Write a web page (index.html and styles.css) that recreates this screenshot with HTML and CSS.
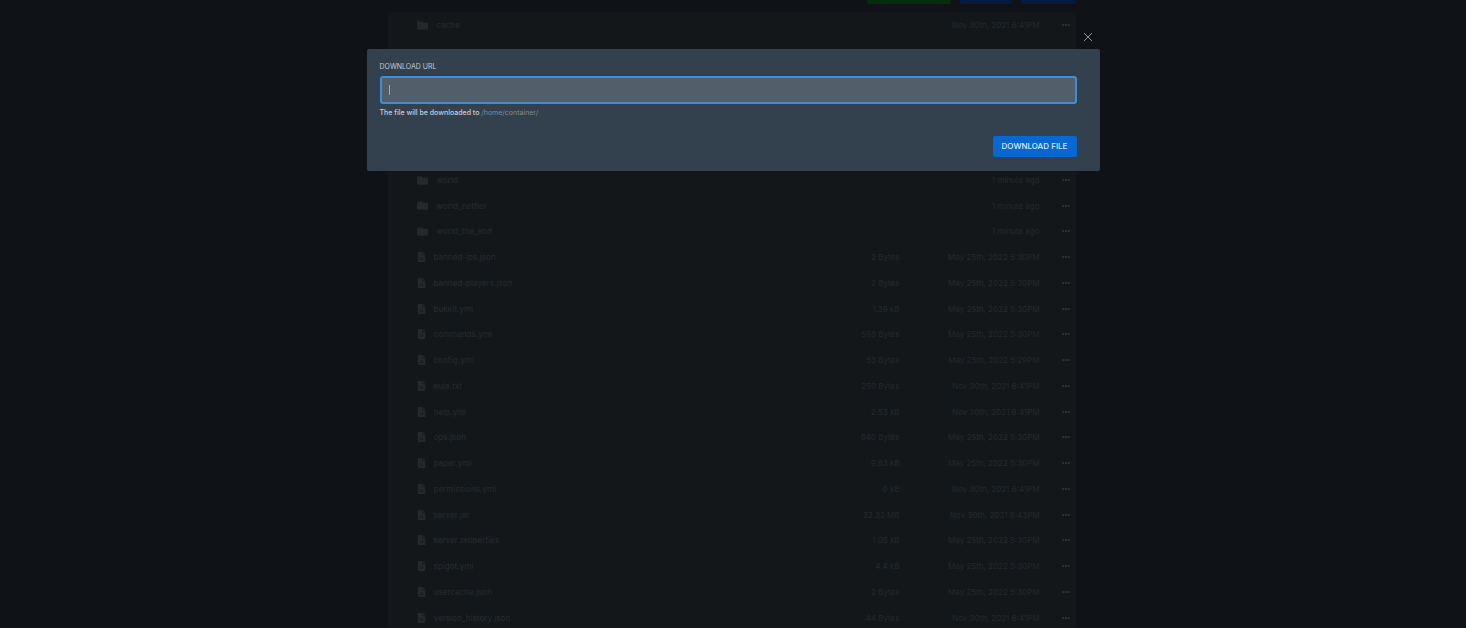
FILE: index.html
```
<!DOCTYPE html>
<html lang="en">
<head>
<meta charset="utf-8">
<title>File Manager</title>
<link rel="stylesheet" href="styles.css">
</head>
<body>
<svg class="sprite" aria-hidden="true">
  <symbol id="folder" viewBox="0 0 512 512"><path d="M464 128H272l-64-64H48C21.500 64 0 85.500 0 112v288c0 26.500 21.500 48 48 48h416c26.500 0 48-21.500 48-48V176c0-26.500-21.500-48-48-48z"/></symbol>
  <symbol id="file" viewBox="0 0 384 512"><path d="M224 136V0H24C10.700 0 0 10.700 0 24v464c0 13.300 10.700 24 24 24h336c13.300 0 24-10.700 24-24V160H248c-13.200 0-24-10.800-24-24zm64 236c0 6.600-5.400 12-12 12H108c-6.600 0-12-5.400-12-12v-8c0-6.600 5.400-12 12-12h168c6.600 0 12 5.400 12 12v8zm0-64c0 6.600-5.400 12-12 12H108c-6.600 0-12-5.400-12-12v-8c0-6.600 5.400-12 12-12h168c6.600 0 12 5.400 12 12v8zM384 122v6H256V0h6.100c6.400 0 12.500 2.500 17 7l97.900 98c4.500 4.500 7 10.600 7 17z"/></symbol>
  <symbol id="dots" viewBox="0 0 512 512"><path d="M328 256a72 72 0 1 1-144 0 72 72 0 0 1 144 0zm104-72a72 72 0 1 0 0 144 72 72 0 0 0 0-144zM80 184a72 72 0 1 0 0 144 72 72 0 0 0 0-144z"/></symbol>
</svg>
<main class="page">
  <div class="actions">
    <button class="action action-green" aria-label="Create Directory"></button>
    <button class="action action-upload" aria-label="Upload"></button>
    <button class="action action-new" aria-label="New File"></button>
  </div>
  <table class="files">
    <tbody id="rows"></tbody>
  </table>
</main>
<div class="overlay">
  <section class="modal" role="dialog" aria-modal="true" aria-label="Download file">
    <button class="close" aria-label="Close"><svg viewBox="0 0 10 10"><path d="M1 1l8 8M9 1L1 9"/></svg></button>
    <form class="form">
      <label class="label" for="url">DOWNLOAD URL</label>
      <div class="field"><input class="input" id="url" type="text"><span class="caret"></span></div>
      <p class="help">The file will be downloaded to <span class="path">/home/container/</span></p>
      <button class="submit" type="button">DOWNLOAD FILE</button>
    </form>
  </section>
</div>
<script src="files.js"></script>
</body>
</html>
```
FILE: styles.css
```
* { box-sizing: border-box; }
body {
  margin: 0;
  height: 100vh;
  overflow: hidden;
  background: #0f1318;
  font-family: Inter, "Open Sans", sans-serif;
  font-size: 8px;
  color: #25292c;
}
.sprite { display: none; }
button { border: 0; padding: 0; font: inherit; }
.page { width: 47%; margin: 0 auto; padding-right: 2px; }
.actions { display: flex; justify-content: flex-end; gap: 9px; }
.action { height: 4px; border-radius: 0 0 2px 2px; background: #031d42; }
.action-green { width: 84px; background: #052c0c; }
.action-upload { width: 52px; }
.action-new { width: 55px; }
.files {
  width: 100%;
  margin-top: 8px;
  border-collapse: collapse;
  table-layout: fixed;
  background: #13171a;
}
.row { height: 26px; }
.row:nth-child(4n) { height: 25px; }
.covered { height: 129px; }
.files td { padding: 0; line-height: 10px; vertical-align: middle; white-space: nowrap; }
.files .icon-cell { width: 45px; padding-left: 29px; }
.icon { display: block; width: 9px; height: 10px; fill: #25292c; }
.icon-folder { width: 11px; height: 11px; }
.files .file, .files .folder { font-weight: 500; }
.files .folder { padding-left: 3px; }
.files .size { width: 110px; text-align: right; }
.files .date { width: 140px; text-align: right; }
.files .menu { width: 36px; padding-left: 22px; }
.dots { display: block; width: 8px; height: 10px; fill: #303437; }
.overlay { position: fixed; inset: 0; padding-top: 49px; }
.modal {
  position: relative;
  width: 50%;
  margin: 0 auto;
  padding: 14px 23px 14px 13px;
  border-radius: 2px;
  background: #33404d;
}
.close { position: absolute; top: -17px; right: 7px; width: 10px; height: 10px; background: none; }
.close svg { display: block; width: 10px; height: 10px; fill: none; stroke: #96999c; stroke-width: 1; }
.form { display: flex; flex-direction: column; }
.label { margin-bottom: 5px; font-size: 7px; line-height: 8px; color: #c3cbd3; }
.field { position: relative; display: flex; }
.input {
  flex: 1;
  height: 28px;
  padding: 0 7px;
  border: 2px solid #408dd6;
  border-radius: 3px;
  outline: 0;
  background: #525f6b;
  color: #d5dce3;
  font: inherit;
}
.caret { position: absolute; left: 9px; top: 9px; width: 1px; height: 10px; background: #a0aab3; }
.help { margin: 4px 0 18px; font-size: 7px; line-height: 10px; font-weight: 500; color: #c8d0d8; }
.path { font-weight: 400; color: #7f8c98; }
.submit {
  align-self: flex-end;
  width: 84px;
  height: 21px;
  padding-bottom: 2px;
  border-radius: 2px;
  background: #0967d2;
  color: #dcecff;
  font-weight: 500;
}
```
FILE: files.js
```
const may = "May 25th, 2022 5:30PM";
const nov = "Nov 30th, 2021 6:41PM";
const files = [
  ["cache", null, nov],
  null,
  ["world", null, "1 minute ago"],
  ["world_nether", null, "1 minute ago"],
  ["world_the_end", null, "1 minute ago"],
  ["banned-ips.json", "2 Bytes", may],
  ["banned-players.json", "2 Bytes", may],
  ["bukkit.yml", "1.39 kB", may],
  ["commands.yml", "598 Bytes", may],
  ["config.yml", "53 Bytes", "May 25th, 2022 5:29PM"],
  ["eula.txt", "250 Bytes", nov],
  ["help.yml", "2.53 kB", nov],
  ["ops.json", "640 Bytes", may],
  ["paper.yml", "9.63 kB", may],
  ["permissions.yml", "0 kB", nov],
  ["server.jar", "32.32 MB", "Nov 30th, 2021 6:43PM"],
  ["server.properties", "1.05 kB", may],
  ["spigot.yml", "4.4 kB", may],
  ["usercache.json", "2 Bytes", may],
  ["version_history.json", "44 Bytes", nov]
];
document.getElementById("rows").innerHTML = files.map(file => {
  if (!file) return '<tr class="covered"><td colspan="5"></td></tr>';
  const [name, size, date] = file;
  const kind = size ? "file" : "folder";
  return `<tr class="row">
    <td class="icon-cell"><svg class="icon icon-${kind}"><use href="#${kind}"/></svg></td>
    <td class="${kind}">${name}</td>
    <td class="size">${size || ""}</td>
    <td class="date">${date}</td>
    <td class="menu"><svg class="dots"><use href="#dots"/></svg></td>
  </tr>`;
}).join("");
```
